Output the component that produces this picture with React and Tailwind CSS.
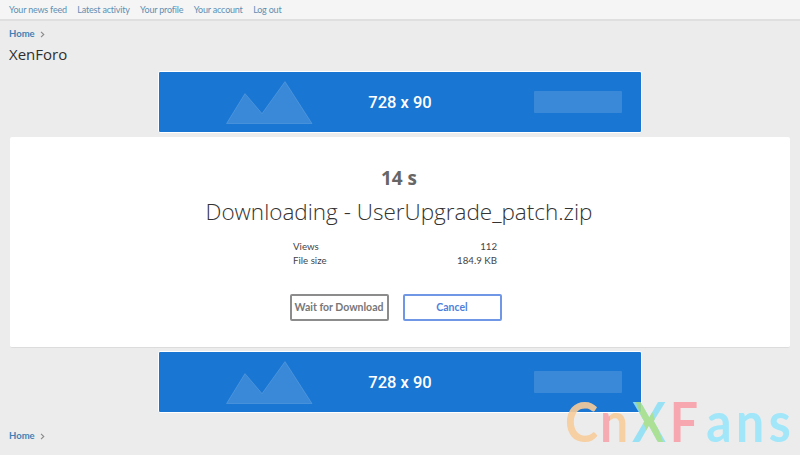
const font = "font-['Lato','Open_Sans',sans-serif]";

function AdBanner() {
  return (
    <div className="relative mx-auto flex h-[62px] w-[484px] items-center justify-center rounded-[2px] border border-white bg-[#1976d2]">
      {/* placeholder artwork */}
      <svg className="absolute left-0 top-0" width="482" height="60" viewBox="0 0 482 60">
        <path d="M67.5 51.5 L86 21.5 L103 41.5 L126 9.5 L153 51.5 Z" fill="#fff" fillOpacity="0.14" stroke="#fff" strokeOpacity="0.14" strokeWidth="1" strokeLinejoin="round" />
        <rect x="375" y="19" width="88" height="22" rx="1" fill="#fff" fillOpacity="0.14" />
      </svg>
      <span className="relative pt-[2px] font-['Roboto',sans-serif] text-[16.5px] font-medium text-white">728 x 90</span>
    </div>
  );
}

function Crumb() {
  return (
    <div className="flex items-center gap-[5px] text-[9.5px] font-bold leading-[14px] text-[#3f81b5]">
      <span>Home</span>
      <svg width="5" height="7" viewBox="0 0 5 7" fill="none" stroke="#8a8a8a" strokeWidth="1.1">
        <path d="M1 0.8 L3.8 3.5 L1 6.2" />
      </svg>
    </div>
  );
}

export default function App() {
  const links = ['Your news feed', 'Latest activity', 'Your profile', 'Your account', 'Log out'];

  return (
    <div className={`relative h-[455px] w-[800px] overflow-hidden bg-[#ececec] ${font}`}>
      {/* Top nav */}
      <div className="flex h-[21px] items-center gap-[10.5px] border-b-2 border-[#dfdfdf] bg-[#f5f5f5] pl-[9px] text-[9px] tracking-[-0.2px] text-[#5f8fb3]">
        {links.map(l => <span key={l}>{l}</span>)}
      </div>

      <div className="px-[9px] pt-[6px]">
        <Crumb />
        <h1 className="mt-[2px] font-['Open_Sans',sans-serif] text-[15px] font-normal leading-[22px] text-[#2f2f2f]">XenForo</h1>
      </div>

      <div className="mt-[6px]"><AdBanner /></div>

      {/* Download card */}
      <div className="mx-[10px] mt-[4px] flex h-[211px] flex-col items-center rounded-[2px] border-b border-[#dcdcdc] bg-white">
        <div className="mr-[2px] mt-[28px] font-['Open_Sans',sans-serif] text-[19px] font-bold leading-[26px] text-[#666666]">14 s</div>
        <h2 className="mr-[2px] mt-[5px] font-['Open_Sans',sans-serif] text-[22.5px] font-light leading-[32px] text-[#333333]">Downloading - UserUpgrade_patch.zip</h2>

        <div className="mr-[10px] mt-[11px] w-[204px] text-[9.7px] leading-[14px] text-[#444444]">
          <div className="flex justify-between"><span>Views</span><span>112</span></div>
          <div className="flex justify-between"><span>File size</span><span>184.9 KB</span></div>
        </div>

        <div className="mr-[9px] mt-[27px] flex gap-[14px]">
          <button className="h-[27px] w-[99px] rounded-[2px] border-2 border-[#8c8c8c] text-[10.5px] font-bold text-[#777777]">Wait for Download</button>
          <button className="h-[27px] w-[99px] rounded-[2px] border-2 border-[#6f97e6] text-[10.5px] font-bold text-[#4f7fdb]">Cancel</button>
        </div>
      </div>

      <div className="mt-[3px]"><AdBanner /></div>

      <div className="mt-[16px] px-[9px]"><Crumb /></div>

      {/* Watermark */}
      <div className="absolute left-[565px] top-[397px] flex origin-[50%_47px] scale-y-110 text-[50px] font-bold leading-[52px] opacity-90">
        <span className="text-[#f8cc9a]">C</span>
        <span className="ml-[2px] bg-[linear-gradient(90deg,#f8a5ac_36%,#f8cc9a_36%)] bg-clip-text text-transparent">n</span>
        <span className="relative ml-[4px] text-[#8fe0f7]">
          X
          <span className="absolute left-0 top-0 text-[#a6e08c] [clip-path:polygon(0_0,38%_0,100%_100%,62%_100%)]">X</span>
        </span>
        <span className="ml-[4px] text-[#f8a0aa]">F</span>
        <span className="ml-[8px] tracking-[4.5px] text-[#9ae6fb]">ans</span>
      </div>
    </div>
  );
}
